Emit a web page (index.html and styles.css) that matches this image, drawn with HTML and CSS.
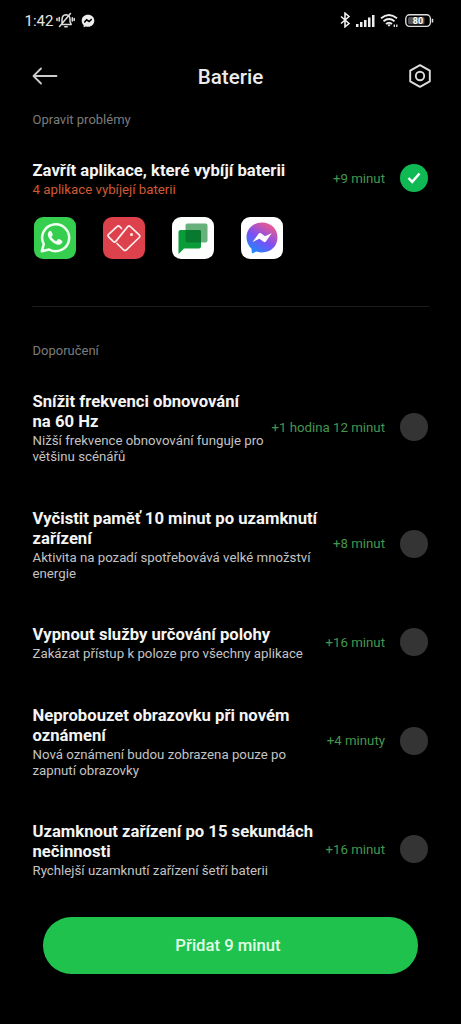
FILE: index.html
```html
<!DOCTYPE html>
<html lang="cs">
<head>
<meta charset="utf-8">
<title>Baterie</title>
<link rel="stylesheet" href="styles.css">
</head>
<body>
<div class="screen">
  <div class="status">
    <span class="clock">1:42</span>
    <svg class="bell" width="19" height="18" viewBox="0 0 19 18" fill="none" stroke="#ddd" stroke-width="1.500" stroke-linecap="round"><path d="M5.500 13.500H15M6 13V8.500q0-4.500 4-4.800 4 .3 4 4.800v2l1.200 3M8.800 15.800h2.400M3.500 15.500L14.500 2.500M1 7.500v2M3.200 6.500v3.500M16.300 6.800v3.200M18.200 7.500v2"/></svg>
    <svg class="msg" width="14" height="14" viewBox="0 0 14 14"><path fill="#eee" d="M7 .8C3.300.8.700 3.400.700 6.700c0 1.700.7 3.200 1.900 4.300v2.200l2-.8c.8.2 1.500.3 2.400.3 3.700 0 6.300-2.600 6.300-6S10.700.8 7 .8z"/><path d="M3.300 8.500l2.300-2.700 2.500 1.700 2.600-2.300" fill="none" stroke="#000" stroke-width="1.600"/></svg>
    <span class="fill"></span>
    <svg width="11" height="16" viewBox="0 0 11 16" fill="none" stroke="#eee" stroke-width="1.600"><path d="M1 4.500l8 7-4 3.300V1.200l4 3.300-8 7"/></svg>
    <svg class="signal" width="19" height="14" viewBox="0 0 19 14" fill="#eee"><rect x="0" y="10" width="2.500" height="3"/><rect x="4" y="8" width="2.500" height="5"/><rect x="8" y="6" width="2.500" height="7"/><rect x="12" y="3.500" width="2.500" height="9.500"/><rect x="16" y="1" width="2.500" height="12"/></svg>
    <svg class="wifi" width="19" height="15" viewBox="0 0 19 15" fill="none" stroke="#eee" stroke-width="1.800"><path d="M1 5.300q8-6.700 16 0M3.500 8.300q5.500-4.500 11 0M6 11q3-2.600 6 0"/><path d="M9 13.800l-1.700-2q1.700-1.200 3.400 0z" fill="#eee" stroke="none"/><path d="M14.300 11.500v2.500M16.800 11.500v2.500" stroke-width="1.300"/></svg>
    <svg class="battery" width="29" height="14" viewBox="0 0 29 14"><rect x=".8" y=".8" width="24.600" height="11.600" rx="3.800" fill="none" stroke="#ddd" stroke-width="1.400"/><rect x="3" y="3" width="16.500" height="7.200" rx="1.500" fill="#555"/><path d="M27.500 4.800v3.700" stroke="#ddd" stroke-width="1.500"/><text x="13" y="10.100" text-anchor="middle" class="level">80</text></svg>
  </div>
  <header class="bar">
    <svg width="26" height="18" viewBox="0 0 26 18" fill="none" stroke="#ccc" stroke-width="1.800" stroke-linecap="round" stroke-linejoin="round"><path d="M24.500 9H1.500M9 1.500L1.500 9 9 16.500"/></svg>
    <h1>Baterie</h1>
    <svg width="24" height="24" viewBox="0 0 24 24" fill="none" stroke="#ddd" stroke-width="1.900" stroke-linejoin="round"><path d="M12 1.200l9.800 5.500v10.600L12 22.800 2.200 17.300V6.700z"/><circle cx="12" cy="12" r="4.200"/></svg>
  </header>

  <h2 class="section">Opravit problémy</h2>
  <section class="fix">
    <div class="item">
      <div class="text"><h3>Zavřít aplikace, které vybíjí baterii</h3><p class="warn">4 aplikace vybíjejí baterii</p></div>
      <span class="gain">+9 minut</span>
      <span class="check on"><svg width="14" height="12" viewBox="0 0 14 12" fill="none" stroke="#fff" stroke-width="2.500"><path d="M1.500 6l3.700 3.800L12.500 1.500"/></svg></span>
    </div>
    <div class="apps">
      <svg width="42" height="42" viewBox="0 0 42 42"><rect width="42" height="42" rx="9" fill="#35ce4e"/><path d="M7.800 34.200l2-7A13.500 13.500 0 1 1 15 32.500z" fill="none" stroke="#effff0" stroke-width="2.500" stroke-linejoin="round"/><path d="M16.200 13.800c-.7 0-2.400 1.500-2.400 3.700 0 4.600 6.700 10.300 10.700 10.300 2.200 0 4-1.400 4-3.500 0-.5-3.700-2.500-4.100-2.300-.7.200-1.500 2-2.100 2-1.400 0-4.800-3.200-4.800-4.300 0-.6 1.300-1.200 1.300-2 0-.4-1.200-3.900-2.600-3.900z" fill="#f4fff4"/></svg>
      <svg width="42" height="42" viewBox="0 0 42 42"><rect width="42" height="42" rx="9" fill="#dc414c"/><path d="M18.500 11.500L16.800 9.600q-1.400-1.200-2.800 0L5.600 17.400q-1.200 1.200 0 2.400l4.600 4.600q1.300 1.200 2.600 0L24.700 9.600q1.300-1.400 2.700 0l8.800 8.300q1.300 1.200 0 2.600L23.400 32.800q-1.400 1.300-2.800 0L14 26.500" fill="none" stroke="#ffecee" stroke-width="1.700" stroke-linejoin="round" stroke-linecap="round"/><circle cx="28.500" cy="17.400" r="1.500" fill="#ffecee"/></svg>
      <svg width="42" height="42" viewBox="0 0 42 42"><rect width="42" height="42" rx="9" fill="#fcfffc"/><rect x="13.500" y="6.500" width="22" height="19" rx="2" fill="#69b17c"/><path d="M8.500 13H27q2 0 2 2v14.500q0 2-2 2H12L6.500 37V15q0-2 2-2z" fill="#0a9c39"/><path d="M13.500 13H27q2 0 2 2v10.500H15.500q-2 0-2-2z" fill="#087a30"/></svg>
      <svg width="42" height="42" viewBox="0 0 42 42"><defs><linearGradient id="mg" x1=".2" y1="1" x2=".8" y2="0"><stop offset="0" stop-color="#178dff"/><stop offset=".45" stop-color="#7950f5"/><stop offset="1" stop-color="#fa5b83"/></linearGradient></defs><rect width="42" height="42" rx="9" fill="#fff"/><path d="M21 5.500C12 5.500 5.500 12 5.500 20.500c0 4.700 2 8.500 5 11.200l.4 4.800 4.500-2c1.800.6 3.600.9 5.600.9 9 0 15.500-6.500 15.500-14.900S30 5.500 21 5.500z" fill="url(#mg)"/><path d="M11.500 25l6.300-8.500q1-1 2.200-.2l4 3 6.800-3.300-5.900 8.500q-1 1.300-2.300.3l-4.200-3z" fill="#fff"/></svg>
    </div>
  </section>

  <h2 class="section rec">Doporučení</h2>
  <main class="list">
    <div class="item">
      <div class="text"><h3>Snížit frekvenci obnovování<br>na 60 Hz</h3><p>Nižší frekvence obnovování funguje pro<br>většinu scénářů</p></div>
      <span class="gain">+1 hodina 12 minut</span><span class="check"></span>
    </div>
    <div class="item">
      <div class="text"><h3>Vyčistit paměť 10 minut po uzamknutí<br>zařízení</h3><p>Aktivita na pozadí spotřebovává velké množství<br>energie</p></div>
      <span class="gain">+8 minut</span><span class="check"></span>
    </div>
    <div class="item">
      <div class="text"><h3>Vypnout služby určování polohy</h3><p>Zakázat přístup k poloze pro všechny aplikace</p></div>
      <span class="gain">+16 minut</span><span class="check"></span>
    </div>
    <div class="item">
      <div class="text"><h3>Neprobouzet obrazovku při novém<br>oznámení</h3><p>Nová oznámení budou zobrazena pouze po<br>zapnutí obrazovky</p></div>
      <span class="gain">+4 minuty</span><span class="check"></span>
    </div>
    <div class="item">
      <div class="text"><h3>Uzamknout zařízení po 15 sekundách<br>nečinnosti</h3><p>Rychlejší uzamknutí zařízení šetří baterii</p></div>
      <span class="gain">+16 minut</span><span class="check"></span>
    </div>
  </main>
  <button class="cta">Přidat 9 minut</button>
</div>
</body>
</html>
```
FILE: styles.css
```css
* { box-sizing: border-box; }
body { margin: 0; background: #000; }
svg { display: block; flex: none; }
h1, h2, h3, p { margin: 0; font-weight: 400; }
.screen {
  width: 461px;
  height: 1024px;
  overflow: hidden;
  display: flex;
  flex-direction: column;
  font-family: Roboto, "Noto Sans", sans-serif;
  color: #f0f0f0;
}
.status { display: flex; align-items: center; height: 40px; padding: 0 27px 0 24.5px; flex: none; }
.clock { font-size: 15px; line-height: 20px; padding-top: 2px; color: #e4e4e4; }
.bell { margin-left: 3px; }
.msg { margin: 1px 0 0 5.5px; }
.fill { flex: 1; }
.signal { margin: 2px 0 0 5px; }
.wifi { margin: 0 0 0 5px; }
.battery { margin: 1px 0 0 6px; }
.level { font-size: 9px; font-weight: 700; fill: #fff; }
.bar {
  display: flex;
  align-items: center;
  justify-content: space-between;
  height: 72px;
  padding: 0 29px 0 32px;
  flex: none;
}
.bar h1 { font-size: 20.6px; font-weight: 500; line-height: 24px; color: #ececec; padding: 2px 5px 0 0; }
.section { font-size: 13px; line-height: 16px; color: #7c7c7c; padding-left: 32.5px; }
.fix { margin: 33px 32px 0; height: 145.5px; border-bottom: 1px solid #1c1c1c; flex: none; }
.item { display: flex; align-items: center; }
.text { flex: 1; white-space: nowrap; padding-left: 0.5px; }
.item h3 { font-size: 16.67px; font-weight: 700; line-height: 20px; color: #f4f4f4; }
.item p { font-size: 13.25px; line-height: 16.2px; margin-top: 1px; color: #c4c4c4; }
.item .warn { color: #d15a35; }
.gain { font-size: 13.25px; line-height: 16px; color: #44974f; white-space: nowrap; padding-bottom: 2px; }
.check { width: 28px; height: 28px; border-radius: 50%; background: #343434; margin: 0 1px 3px 15px; flex: none; }
.check.on { background: #0fba55; display: flex; align-items: center; justify-content: center; }
.apps { display: flex; gap: 27px; margin: 19px 0 0 2px; }
.rec { margin-top: 36.5px; }
.list { display: flex; flex-direction: column; gap: 43.2px; padding: 33px 32px 0; }
.cta {
  width: 375px;
  height: 57px;
  margin: auto 0 50px 43px;
  padding: 0 5px 0 0;
  border: 0;
  border-radius: 29px;
  background: #20c24e;
  color: #e0ffe6;
  font: 500 16.67px/20px Roboto, "Noto Sans", sans-serif;
  flex: none;
}
```
